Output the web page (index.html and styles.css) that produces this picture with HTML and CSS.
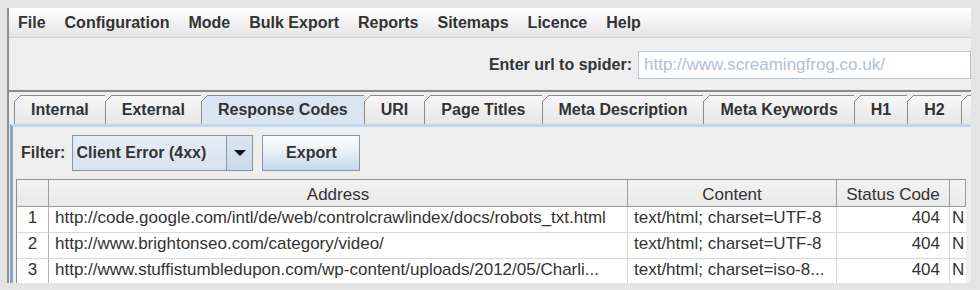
FILE: index.html
```html
<!DOCTYPE html>
<html lang="en">
<head>
<meta charset="utf-8">
<title>Screaming Frog SEO Spider</title>
<link rel="stylesheet" href="styles.css">
</head>
<body>
<div class="window">
  <div class="menubar">
    <span class="menu">File</span>
    <span class="menu">Configuration</span>
    <span class="menu">Mode</span>
    <span class="menu">Bulk Export</span>
    <span class="menu">Reports</span>
    <span class="menu">Sitemaps</span>
    <span class="menu">Licence</span>
    <span class="menu">Help</span>
  </div>
  <div class="urlbar">
    <span class="url-label">Enter url to spider:</span>
    <div class="url-input">http://www.screamingfrog.co.uk/</div>
  </div>
  <div class="tabstrip">
    <div class="tab">Internal</div>
    <div class="tab">External</div>
    <div class="tab active">Response Codes</div>
    <div class="tab">URI</div>
    <div class="tab">Page Titles</div>
    <div class="tab">Meta Description</div>
    <div class="tab">Meta Keywords</div>
    <div class="tab">H1</div>
    <div class="tab">H2</div>
    <div class="tab tab-more"></div>
  </div>
  <div class="panel">
    <div class="filterbar">
      <span class="filter-label">Filter:</span>
      <div class="combo">
        <span class="combo-value">Client Error (4xx)</span>
        <span class="combo-arrow"><svg width="12" height="6" viewBox="0 0 12 6"><polygon points="0,0 12,0 6,6" fill="#111"/></svg></span>
      </div>
      <button class="btn">Export</button>
    </div>
    <div class="grid">
      <div class="hc"></div>
      <div class="hc">Address</div>
      <div class="hc">Content</div>
      <div class="hc">Status Code</div>
      <div class="hc"></div>

      <div class="c num">1</div>
      <div class="c addr">http://code.google.com/intl/de/web/controlcrawlindex/docs/robots_txt.html</div>
      <div class="c content">text/html; charset=UTF-8</div>
      <div class="c status">404</div>
      <div class="c last">N</div>

      <div class="c num">2</div>
      <div class="c addr">http://www.brightonseo.com/category/video/</div>
      <div class="c content">text/html; charset=UTF-8</div>
      <div class="c status">404</div>
      <div class="c last">N</div>

      <div class="c num">3</div>
      <div class="c addr">http://www.stuffistumbledupon.com/wp-content/uploads/2012/05/Charli...</div>
      <div class="c content">text/html; charset=iso-8...</div>
      <div class="c status">404</div>
      <div class="c last">N</div>
    </div>
  </div>
</div>
</body>
</html>
```

FILE: styles.css
```css
* { box-sizing: border-box; }
html, body { margin: 0; }
body {
  width: 980px;
  height: 290px;
  overflow: hidden;
  background: #e4e4e4;
  padding: 8px 0 0 7px;
  font-family: "Liberation Sans", Arial, sans-serif;
  color: #333333;
}
.window {
  width: 964px;
  height: 275px;
  border-left: 2px solid #8d8d8d;
  background: #eeeeee;
  overflow: hidden;
  display: flex;
  flex-direction: column;
}
.menubar {
  flex: none;
  height: 30px;
  display: flex;
  gap: 19px;
  padding-left: 9px;
  border-bottom: 1px solid #d3cfcf;
  background: linear-gradient(#ffffff, #f4f4f4 45%, #e4e4e4);
  font-weight: bold;
  font-size: 16px;
  line-height: 29px;
}
.urlbar {
  flex: none;
  height: 54px;
  padding-top: 2px;
  display: flex;
  justify-content: flex-end;
  align-items: center;
  gap: 6px;
  border-bottom: 2px solid #8a8a8a;
}
.url-label {
  font-weight: bold;
  font-size: 16px;
}
.url-input {
  width: 333px;
  height: 28px;
  border: 1px solid #b8c5d3;
  background: #ffffff;
  color: #b3c0cf;
  font-size: 17px;
  line-height: 26px;
  padding-left: 5px;
  white-space: nowrap;
}
.tabstrip {
  flex: none;
  height: 32px;
  padding: 3px 0 0 5px;
  display: flex;
  overflow: hidden;
}
.tab {
  flex: none;
  position: relative;
  height: 29px;
  padding: 0 16px;
  border: 1px solid #8b8b8b;
  border-bottom: none;
  border-right: none;
  background: linear-gradient(#f8f8f8, #e6e6e6);
  font-weight: bold;
  font-size: 16px;
  line-height: 28px;
  white-space: nowrap;
}
.tab.tab-more {
  width: 40px;
  border-right: 1px solid #8b8b8b;
}
.tab::before {
  content: "";
  position: absolute;
  left: -1px;
  top: -1px;
  width: 7px;
  height: 7px;
  background: linear-gradient(to bottom right, #eeeeee calc(50% - 0.7px), #8b8b8b calc(50% - 0.7px), #8b8b8b calc(50% + 0.7px), transparent calc(50% + 0.7px));
}
.tab.active {
  background: #dae5f1;
}
.panel {
  flex: 1;
  min-height: 0;
  margin-left: 1px;
  border-top: 3px solid #c4d6ea;
  border-left: 3px solid #8ea3c2;
  padding: 0 5px 0 3px;
  overflow: hidden;
}
.filterbar {
  height: 52px;
  display: flex;
  align-items: center;
  padding-left: 5px;
}
.filter-label {
  font-weight: bold;
  font-size: 16px;
  margin-right: 7px;
}
.combo {
  display: flex;
  width: 181px;
  height: 36px;
  border: 1px solid #8596aa;
  background: linear-gradient(#e6edf5, #d9e3ee);
}
.combo-value {
  flex: 1;
  padding-left: 3px;
  font-weight: bold;
  font-size: 16px;
  line-height: 34px;
  white-space: nowrap;
}
.combo-arrow {
  width: 26px;
  border-left: 1px solid #8596aa;
  background: linear-gradient(#dbe5f0, #cbd9e8);
  display: flex;
  align-items: center;
  justify-content: center;
}
.btn {
  margin-left: 9px;
  width: 98px;
  height: 36px;
  padding: 0;
  border: 1px solid #8596aa;
  background: linear-gradient(#fdfeff, #eef3f9 35%, #c6d8ec);
  font-family: "Liberation Sans", Arial, sans-serif;
  font-weight: bold;
  font-size: 16px;
  color: #333333;
}
.grid {
  display: grid;
  grid-template-columns: 32px 579px 209px 113px 16px;
  border-top: 1px solid #8e8e8e;
  border-left: 1px solid #8e8e8e;
  background: #ffffff;
  font-size: 17px;
}
.hc {
  height: 27px;
  padding-top: 5px;
  line-height: 20px;
  text-align: center;
  background: linear-gradient(#f2f2f2, #e9e9e9);
  border-right: 1px solid #9c9c9c;
  border-bottom: 1px solid #9c9c9c;
  white-space: nowrap;
  overflow: hidden;
}
.c {
  height: 26px;
  padding: 1px 0 0 6px;
  line-height: 20px;
  border-right: 1px solid #d8d8d8;
  border-bottom: 1px solid #d8d8d8;
  white-space: nowrap;
  overflow: hidden;
}
.c.num {
  padding-left: 0;
  text-align: center;
  border-right-color: #b2b2b2;
}
.c.status {
  text-align: right;
  padding-right: 9px;
}
.c.last {
  padding-left: 2px;
  border-right: none;
}
```
